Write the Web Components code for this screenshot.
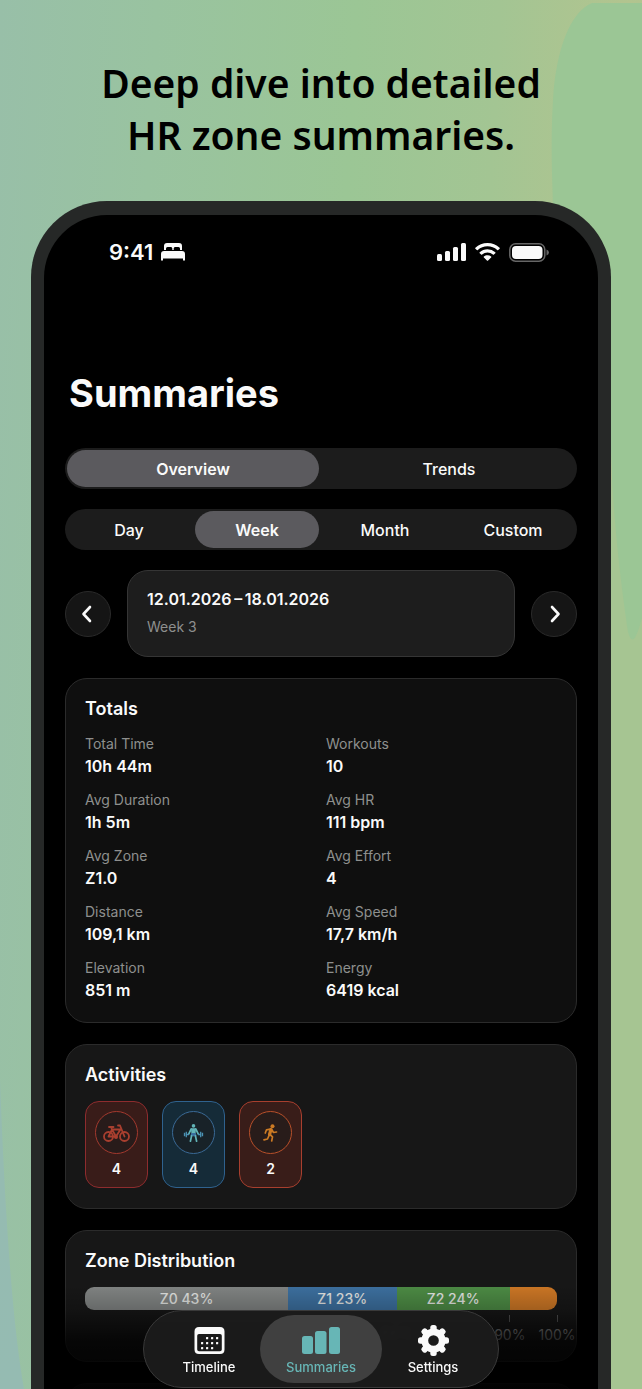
<!DOCTYPE html>
<html lang="en">
<head>
<meta charset="utf-8">
<meta name="viewport" content="width=device-width, initial-scale=1">
<title>HR zone summaries</title>
<style>
	body {
		margin: 0;
		background: #9bc695;
		font-family: Inter, "Liberation Sans", sans-serif;
		color: #fafafa;
	}
</style>
</head>
<body>
<promo-page>
	<span slot="headline">Deep dive into detailed<br>HR zone summaries.</span>
	<phone-frame>
		<status-bar time="9:41"></status-bar>
		<h1>Summaries</h1>
		<ui-stack gap="20">
			<ui-segmented label="View" options="Overview,Trends" value="Overview"></ui-segmented>
			<ui-segmented label="Period" options="Day,Week,Month,Custom" value="Week"></ui-segmented>
			<date-switcher range="12.01.2026&thinsp;–&thinsp;18.01.2026" week="Week 3"></date-switcher>
		</ui-stack>
		<ui-stack gap="21">
			<ui-card heading="Totals" tone="flat">
				<totals-grid></totals-grid>
			</ui-card>
			<ui-card heading="Activities">
				<activity-list></activity-list>
			</ui-card>
			<ui-card heading="Zone Distribution">
				<zone-bar></zone-bar>
			</ui-card>
			<ui-card heading=""></ui-card>
		</ui-stack>
		<tab-bar slot="tabs"></tab-bar>
	</phone-frame>
</promo-page>

<script>
class PromoPage extends HTMLElement {
	constructor() {
		super();
		this.attachShadow({ mode: "open" });
	}

	connectedCallback() {
		this.shadowRoot.innerHTML = `
		<style>
		:host {
			display: flex;
			flex-direction: column;
			position: relative;
			height: 100vh;
			overflow: hidden;
			background: linear-gradient(93deg, #98bfa8 0%, #99c3a0 22%, #9bc695 50%, #a3c593 70%, #b2c48f 88%, #a8c593 100%);
		}

		.backdrop {
			position: absolute;
			inset: 0;
			width: 100%;
			height: 100%;
		}

		.headline {
			position: relative;
			margin: 0;
			padding: 57px 24px 40px;
			text-align: center;
			font: 600 39px/52px "Noto Sans", "Open Sans", sans-serif;
			color: #000;
		}

		main {
			position: relative;
			flex: 1;
			min-height: 0;
			display: flex;
			padding: 0 31px;
		}
		</style>
		<svg class="backdrop" viewBox="0 0 642 1389" preserveAspectRatio="none" aria-hidden="true">
			<defs>
				<linearGradient id="blue" x1="0" x2="0" y1="0" y2="1">
					<stop offset="0" stop-color="#96bcac" stop-opacity="0"/>
					<stop offset=".5" stop-color="#95bbb0"/>
					<stop offset="1" stop-color="#95bbb2"/>
				</linearGradient>
			</defs>
			<path d="M0 420V1080Q8 1300 24 1389H0Z" fill="url(#blue)"/>
			<path d="M600 480H642V1389H600Z" fill="#a6c592"/>
			<path d="M642 3H592C570 12 556 50 553 100C550 150 553 190 553 210L606 300L612 480C616 545 622 590 628 632C632 646 636 640 642 618Z" fill="#9bc695"/>
		</svg>
		<h2 class="headline"><slot name="headline"></slot></h2>
		<main><slot></slot></main>
		`;
	}
}
customElements.define("promo-page", PromoPage);

class PhoneFrame extends HTMLElement {
	constructor() {
		super();
		this.attachShadow({ mode: "open" });
	}

	connectedCallback() {
		this.shadowRoot.innerHTML = `
		<style>
		:host {
			display: flex;
			flex: 1;
			min-width: 0;
			box-sizing: border-box;
			padding: 14px 13px 0;
			border-radius: 76px 76px 0 0;
			background: #262827;
		}

		.screen {
			position: relative;
			flex: 1;
			min-width: 0;
			overflow: hidden;
			border-radius: 63px 63px 0 0;
			background: #000;
		}

		.content {
			display: flex;
			flex-direction: column;
			gap: 21px;
			padding: 21px 21px 0;
		}

		::slotted(h1) {
			margin: 80px 0 10px 4px;
			font-size: 38px;
			line-height: 48px;
			font-weight: 700;
		}

		.fade {
			position: absolute;
			inset: auto 0 0;
			height: 104px;
			background: linear-gradient(transparent, rgba(0, 0, 0, .2) 24%, rgba(0, 0, 0, .75) 55%, rgba(0, 0, 0, .9));
		}

		.tabs {
			position: absolute;
			inset: auto 0 0;
			display: flex;
			justify-content: center;
		}
		</style>
		<div class="screen">
			<div class="content"><slot></slot></div>
			<div class="fade"></div>
			<div class="tabs"><slot name="tabs"></slot></div>
		</div>
		`;
	}
}
customElements.define("phone-frame", PhoneFrame);

class StatusBar extends HTMLElement {
	constructor() {
		super();
		this.attachShadow({ mode: "open" });
	}

	connectedCallback() {
		this.shadowRoot.innerHTML = `
		<style>
		:host {
			display: flex;
			align-items: center;
			justify-content: space-between;
			height: 32px;
			padding: 0 28px 0 44px;
		}

		div {
			display: flex;
			align-items: center;
		}

		time {
			margin-right: 8px;
			font-size: 22px;
			line-height: 32px;
			font-weight: 600;
		}

		.right {
			gap: 9px;
		}

		svg {
			display: block;
			fill: currentColor;
		}
		</style>
		<div>
			<time>${this.getAttribute("time")}</time>
			<svg width="24" height="18" viewBox="0 0 24 18" aria-hidden="true">
				<path d="M3 7V3q0-3 3-3h12q3 0 3 3v4h-2V5.500q0-1.500-1.500-1.500H14q-1.300 0-1.300 1.500V7h-1.400V5.500Q11.300 4 10 4H6.500Q5 4 5 5.500V7Z"/>
				<path d="M0 17.500V11q0-3 3-3h18q3 0 3 3v6.500h-2V15.500H2v2Z"/>
			</svg>
		</div>
		<div class="right">
			<svg width="29" height="18" viewBox="0 0 29 18" aria-hidden="true">
				<rect x="0" y="11" width="5" height="7" rx="1.500"/>
				<rect x="8" y="8" width="5" height="10" rx="1.500"/>
				<rect x="16" y="4" width="5" height="14" rx="1.500"/>
				<rect x="24" y="0" width="5" height="18" rx="1.500"/>
			</svg>
			<svg width="25" height="18" viewBox="0 0 25 18" aria-hidden="true">
				<path d="M12.500 0C7.800 0 3.600 1.800.4 4.700q-.5.500 0 1L1.800 7q.5.400 1 0a14.500 14.500 0 0 1 19.400 0q.5.400 1 0l1.400-1.300q.5-.5 0-1C21.400 1.800 17.200 0 12.500 0Z"/>
				<path d="M12.500 6.200c-3 0-5.700 1.100-7.800 3q-.5.500 0 1l1.400 1.300q.5.400 1 0a8.200 8.200 0 0 1 10.800 0q.5.400 1 0l1.400-1.300q.5-.5 0-1a11.600 11.600 0 0 0-7.800-3Z"/>
				<path d="M12.500 12.200c-1.400 0-2.600.5-3.600 1.300q-.5.500 0 1l3 3.100q.6.500 1.200 0l3-3.100q.5-.5 0-1a5.600 5.600 0 0 0-3.600-1.300Z"/>
			</svg>
			<svg width="40" height="19" viewBox="0 0 40 19" aria-hidden="true">
				<rect x=".8" y=".8" width="35" height="17.400" rx="5.800" fill="none" stroke="#666" stroke-width="1.500"/>
				<rect x="3" y="3" width="30.500" height="13" rx="4"/>
				<path d="M37.500 6.500q2.500 1 2.500 3t-2.500 3Z" fill="#666"/>
			</svg>
		</div>
		`;
	}
}
customElements.define("status-bar", StatusBar);

class UiStack extends HTMLElement {
	constructor() {
		super();
		this.attachShadow({ mode: "open" });
	}

	connectedCallback() {
		this.shadowRoot.innerHTML = `
		<style>
		:host {
			display: flex;
			flex-direction: column;
			gap: ${this.getAttribute("gap")}px;
		}
		</style>
		<slot></slot>
		`;
	}
}
customElements.define("ui-stack", UiStack);

class UiSegmented extends HTMLElement {
	constructor() {
		super();
		this.attachShadow({ mode: "open" });
	}

	static get observedAttributes() {
		return ["options", "value"];
	}
	attributeChangedCallback() {
		this.render();
	}

	connectedCallback() {
		this.render();
		this.shadowRoot.addEventListener("click", (e) => {
			const button = e.target.closest("button");
			if (button) this.setAttribute("value", button.textContent);
		});
	}

	render() {
		const options = (this.getAttribute("options") || "").split(",");
		const value = this.getAttribute("value");
		this.setAttribute("role", "group");
		this.setAttribute("aria-label", this.getAttribute("label"));

		this.shadowRoot.innerHTML = `
		<style>
		:host {
			display: flex;
			gap: 4px;
			box-sizing: border-box;
			height: 41px;
			padding: 2px;
			border-radius: 21px;
			background: #1c1c1c;
		}

		button {
			flex: 1 1 0;
			min-width: 0;
			padding: 0;
			border: 0;
			border-radius: 19px;
			background: none;
			color: inherit;
			font: 500 16px/24px Inter, "Liberation Sans", sans-serif;
		}

		button[aria-pressed="true"] {
			background: #5b5a5e;
			font-weight: 600;
		}
		</style>
		${options.map((o) => `<button type="button" aria-pressed="${o === value}">${o}</button>`).join("")}
		`;
	}
}
customElements.define("ui-segmented", UiSegmented);

class DateSwitcher extends HTMLElement {
	constructor() {
		super();
		this.attachShadow({ mode: "open" });
	}

	connectedCallback() {
		this.shadowRoot.innerHTML = `
		<style>
		:host {
			display: flex;
			align-items: center;
			gap: 16px;
		}

		button {
			flex: none;
			display: flex;
			align-items: center;
			justify-content: center;
			width: 46px;
			height: 46px;
			padding: 0;
			border: 1px solid #2a2a2a;
			border-radius: 50%;
			background: #151515;
			color: inherit;
		}

		svg {
			fill: none;
			stroke: currentColor;
			stroke-width: 2.600;
			stroke-linecap: round;
			stroke-linejoin: round;
		}

		.range {
			flex: 1;
			min-width: 0;
			padding: 16px 19px 17px;
			border: 1px solid #353535;
			border-radius: 21px;
			background: #1d1d1d;
		}

		p {
			margin: 0;
			font-size: 16px;
			line-height: 24px;
			font-weight: 600;
		}

		.week {
			margin-top: 4px;
			font-size: 14px;
			font-weight: 400;
			color: #8e8f8e;
		}
		</style>
		<button type="button" aria-label="Previous week">
			<svg width="18" height="18" viewBox="0 0 18 18"><path d="M11 2L4.500 9l6.500 7"/></svg>
		</button>
		<div class="range">
			<p>${this.getAttribute("range")}</p>
			<p class="week">${this.getAttribute("week")}</p>
		</div>
		<button type="button" aria-label="Next week">
			<svg width="18" height="18" viewBox="0 0 18 18"><path d="M7 2l6.500 7L7 16"/></svg>
		</button>
		`;
	}
}
customElements.define("date-switcher", DateSwitcher);

class UiCard extends HTMLElement {
	constructor() {
		super();
		this.attachShadow({ mode: "open" });
	}

	connectedCallback() {
		this.shadowRoot.innerHTML = `
		<style>
		:host {
			display: block;
			padding: 19px 19px 20px;
			border: 1px solid #2b2b2b;
			border-radius: 22px;
			background: #171717;
		}

		:host([tone="flat"]) {
			background: #0f0f0f;
		}

		h3 {
			margin: 0;
			min-height: 22px;
			font-size: 18px;
			line-height: 22px;
			font-weight: 600;
		}
		</style>
		<h3>${this.getAttribute("heading")}</h3>
		<slot></slot>
		`;
	}
}
customElements.define("ui-card", UiCard);

class TotalsGrid extends HTMLElement {
	#totals = [
		["Total Time", "10h 44m"],
		["Workouts", "10"],
		["Avg Duration", "1h 5m"],
		["Avg HR", "111 bpm"],
		["Avg Zone", "Z1.0"],
		["Avg Effort", "4"],
		["Distance", "109,1 km"],
		["Avg Speed", "17,7 km/h"],
		["Elevation", "851 m"],
		["Energy", "6419 kcal"],
	];

	constructor() {
		super();
		this.attachShadow({ mode: "open" });
	}

	connectedCallback() {
		this.shadowRoot.innerHTML = `
		<style>
		:host {
			display: block;
			margin-top: 13px;
		}

		dl {
			display: grid;
			grid-template-columns: 1fr 1fr;
			gap: 11px 10px;
			margin: 0;
		}

		dt {
			font-size: 14px;
			line-height: 22px;
			color: #8e8f8e;
		}

		dd {
			margin: 0;
			font-size: 16px;
			line-height: 23px;
			font-weight: 600;
		}
		</style>
		<dl>
			${this.#totals.map(([label, value]) => `<div><dt>${label}</dt><dd>${value}</dd></div>`).join("")}
		</dl>
		`;
	}
}
customElements.define("totals-grid", TotalsGrid);

class ActivityTile extends HTMLElement {
	#icons = {
		cycling: `
			<g fill="none" stroke="currentColor" stroke-width="1.800" stroke-linecap="round" stroke-linejoin="round">
				<circle cx="5.500" cy="12.500" r="4.500"/>
				<circle cx="21.500" cy="12.500" r="4.500"/>
				<path d="M5.500 12.500L9 5.500h8.500l-4.500 7H5.500M9 5.500l4 7M8 3l1 2.500M6 3h4.500M21.500 12.500L17 1.500h-2"/>
			</g>
			<circle cx="13" cy="13" r="2" fill="currentColor"/>`,
		strength: `
			<circle cx="13.500" cy="1.900" r="1.800" fill="currentColor"/>
			<path d="M11 4.200h5l-.4 5.300h-4.200Z" fill="currentColor"/>
			<path d="M11.200 5L8.800 9.800M15.800 5l2.400 4.800" stroke="currentColor" stroke-width="1.700" stroke-linecap="round"/>
			<path d="M11.200 9h4.600l.8 3.300h-6.200Z" fill="#3a6f9e"/>
			<path d="M11.600 11.800l-1.200 5.400M15.400 11.800l1.200 5.400" stroke="currentColor" stroke-width="1.700" stroke-linecap="round"/>
			<path d="M4.500 8.800v3.400M6.300 7.700v5.600M20.700 7.700v5.600M22.500 8.800v3.400M6 10.500h3M18 10.500h3" stroke="#4b93b5" stroke-width="1.300"/>`,
		running: `
			<circle cx="15.500" cy="2.200" r="2" fill="currentColor"/>
			<g fill="none" stroke="currentColor" stroke-linecap="round" stroke-linejoin="round">
				<path d="M14 5.500l-1.500 5" stroke-width="3.200"/>
				<path d="M13.500 5.200l-4 .6L8.300 9M15 6l1.500 2.500 3-.5M13 10.500l2.500 2.300-.8 4.200M12 11.500L10.500 15l-3.500.8" stroke-width="1.700"/>
			</g>`,
	};

	constructor() {
		super();
		this.attachShadow({ mode: "open" });
	}

	connectedCallback() {
		const kind = this.getAttribute("kind");
		this.shadowRoot.innerHTML = `
		<style>
		:host {
			display: flex;
			flex-direction: column;
			align-items: center;
			gap: 5px;
			box-sizing: border-box;
			width: 63px;
			padding: 9px 0 8px;
			border: 1px solid var(--edge);
			border-radius: 14px;
			background: var(--fill);
		}

		:host([kind="cycling"]) {
			--edge: #8e2c2e;
			--fill: #391c19;
			--ring: #a3392e;
			--icon: #a93f2f;
		}

		:host([kind="strength"]) {
			--edge: #2f628e;
			--fill: #152b38;
			--ring: #3a6a96;
			--icon: #62b4b8;
		}

		:host([kind="running"]) {
			--edge: #a83f2e;
			--fill: #391d19;
			--ring: #b8502a;
			--icon: #cc7a24;
		}

		.ring {
			display: flex;
			align-items: center;
			justify-content: center;
			width: 41px;
			height: 41px;
			border: 1px solid var(--ring);
			border-radius: 50%;
			background: rgba(28, 28, 28, .55);
			color: var(--icon);
		}

		span {
			font-size: 14px;
			line-height: 20px;
			font-weight: 600;
		}
		</style>
		<div class="ring">
			<svg width="27" height="18" viewBox="0 0 27 18" role="img" aria-label="${kind}">${this.#icons[kind]}</svg>
		</div>
		<span>${this.getAttribute("count")}</span>
		`;
	}
}
customElements.define("activity-tile", ActivityTile);

class ActivityList extends HTMLElement {
	constructor() {
		super();
		this.attachShadow({ mode: "open" });
	}

	connectedCallback() {
		this.shadowRoot.innerHTML = `
		<style>
		:host {
			display: flex;
			gap: 14px;
			margin-top: 15px;
		}
		</style>
		<activity-tile kind="cycling" count="4"></activity-tile>
		<activity-tile kind="strength" count="4"></activity-tile>
		<activity-tile kind="running" count="2"></activity-tile>
		`;
	}
}
customElements.define("activity-list", ActivityList);

class ZoneBar extends HTMLElement {
	// share of time, fill, bar label, running total shown on the axis
	#zones = [
		[43, "#808382", "Z0 43%", ""],
		[23, "#3c6f9e", "Z1 23%", "66%"],
		[24, "#4c8a44", "Z2 24%", "90%"],
		[10, "#cb7625", "", "100%"],
	];

	constructor() {
		super();
		this.attachShadow({ mode: "open" });
	}

	connectedCallback() {
		this.shadowRoot.innerHTML = `
		<style>
		:host {
			display: block;
			margin-top: 15px;
		}

		.bar {
			display: flex;
			height: 23px;
			overflow: hidden;
			border-radius: 9px;
		}

		.bar div {
			flex-basis: 0;
			text-align: center;
			font-size: 14px;
			line-height: 23px;
			font-weight: 500;
			color: #e0e2e0;
		}

		.axis {
			display: flex;
			height: 31px;
			padding-top: 5px;
			box-sizing: border-box;
		}

		.axis div {
			flex-basis: 0;
			display: flex;
			justify-content: flex-end;
		}

		.mark {
			display: flex;
			flex-direction: column;
			align-items: center;
			gap: 3px;
			width: 0;
			font-size: 14px;
			line-height: 20px;
			color: #8a8a8a;
		}

		.mark::before {
			content: "";
			flex: none;
			width: 1px;
			height: 7px;
			background: #555;
		}
		</style>
		<div class="bar">
			${this.#zones.map(([share, fill, label]) => `<div style="flex-grow:${share};background:${fill}">${label}</div>`).join("")}
		</div>
		<div class="axis">
			${this.#zones.map(([share, , , total]) => `<div style="flex-grow:${share}"><span class="mark">${total}</span></div>`).join("")}
		</div>
		`;
	}
}
customElements.define("zone-bar", ZoneBar);

class TabBar extends HTMLElement {
	constructor() {
		super();
		this.attachShadow({ mode: "open" });
	}

	// eight rounded teeth around the hub
	gear() {
		let teeth = "";
		for (let i = 0; i < 8; i++) {
			teeth += `<rect x="12.700" y="0" width="6.600" height="9" rx="2.600" transform="rotate(${i * 45} 16 16)"/>`;
		}
		return `${teeth}<circle cx="16" cy="16" r="9" fill="none" stroke="currentColor" stroke-width="7"/>`;
	}

	connectedCallback() {
		const dots = [[13, 14], [18, 14], [23, 14], [8, 19], [13, 19], [18, 19], [23, 19], [8, 24], [13, 24], [18, 24]];
		this.shadowRoot.innerHTML = `
		<style>
		:host {
			display: block;
			margin-bottom: 1px;
		}

		nav {
			display: grid;
			grid-template-columns: repeat(3, 112px);
			padding: 4px 9px;
			border: 1px solid #3a3a3a;
			border-radius: 39px;
			background: rgba(28, 28, 28, .93);
			backdrop-filter: blur(2px);
		}

		a {
			display: flex;
			flex-direction: column;
			align-items: center;
			gap: 1px;
			margin: 0 -5px;
			padding: 10px 0 6px;
			border-radius: 34px;
			color: inherit;
			text-decoration: none;
			font-size: 13px;
			line-height: 20px;
			font-weight: 500;
		}

		a[aria-current] {
			background: #404040;
			color: #67b6b6;
		}

		svg {
			fill: currentColor;
		}
		</style>
		<nav aria-label="Main">
			<a href="#timeline">
				<svg width="31" height="31" viewBox="0 0 31 31" aria-hidden="true">
					<path fill-rule="evenodd" d="M5 2h21q4.500 0 4.500 4.500v18q0 4.500-4.500 4.500H5Q.5 29 .5 24.500v-18Q.5 2 5 2ZM5 9q-1.800 0-1.800 1.800v13.700q0 1.800 1.800 1.800h21q1.800 0 1.800-1.800V10.800Q27.800 9 26 9Z"/>
					${dots.map(([x, y]) => `<rect x="${x - 1}" y="${y - 2}" width="2.200" height="2.200" rx=".5"/>`).join("")}
				</svg>
				Timeline
			</a>
			<a href="#summaries" aria-current="page">
				<svg width="38" height="31" viewBox="0 0 38 31" aria-hidden="true">
					<rect x="0" y="11" width="11" height="18" rx="2.500"/>
					<rect x="13" y="6" width="11.500" height="23" rx="2.500"/>
					<rect x="27" y="2" width="11" height="27" rx="2.500"/>
				</svg>
				Summaries
			</a>
			<a href="#settings">
				<svg width="31" height="31" viewBox="0 0 32 32" aria-hidden="true">${this.gear()}</svg>
				Settings
			</a>
		</nav>
		`;
	}
}
customElements.define("tab-bar", TabBar);
</script>
</body>
</html>
